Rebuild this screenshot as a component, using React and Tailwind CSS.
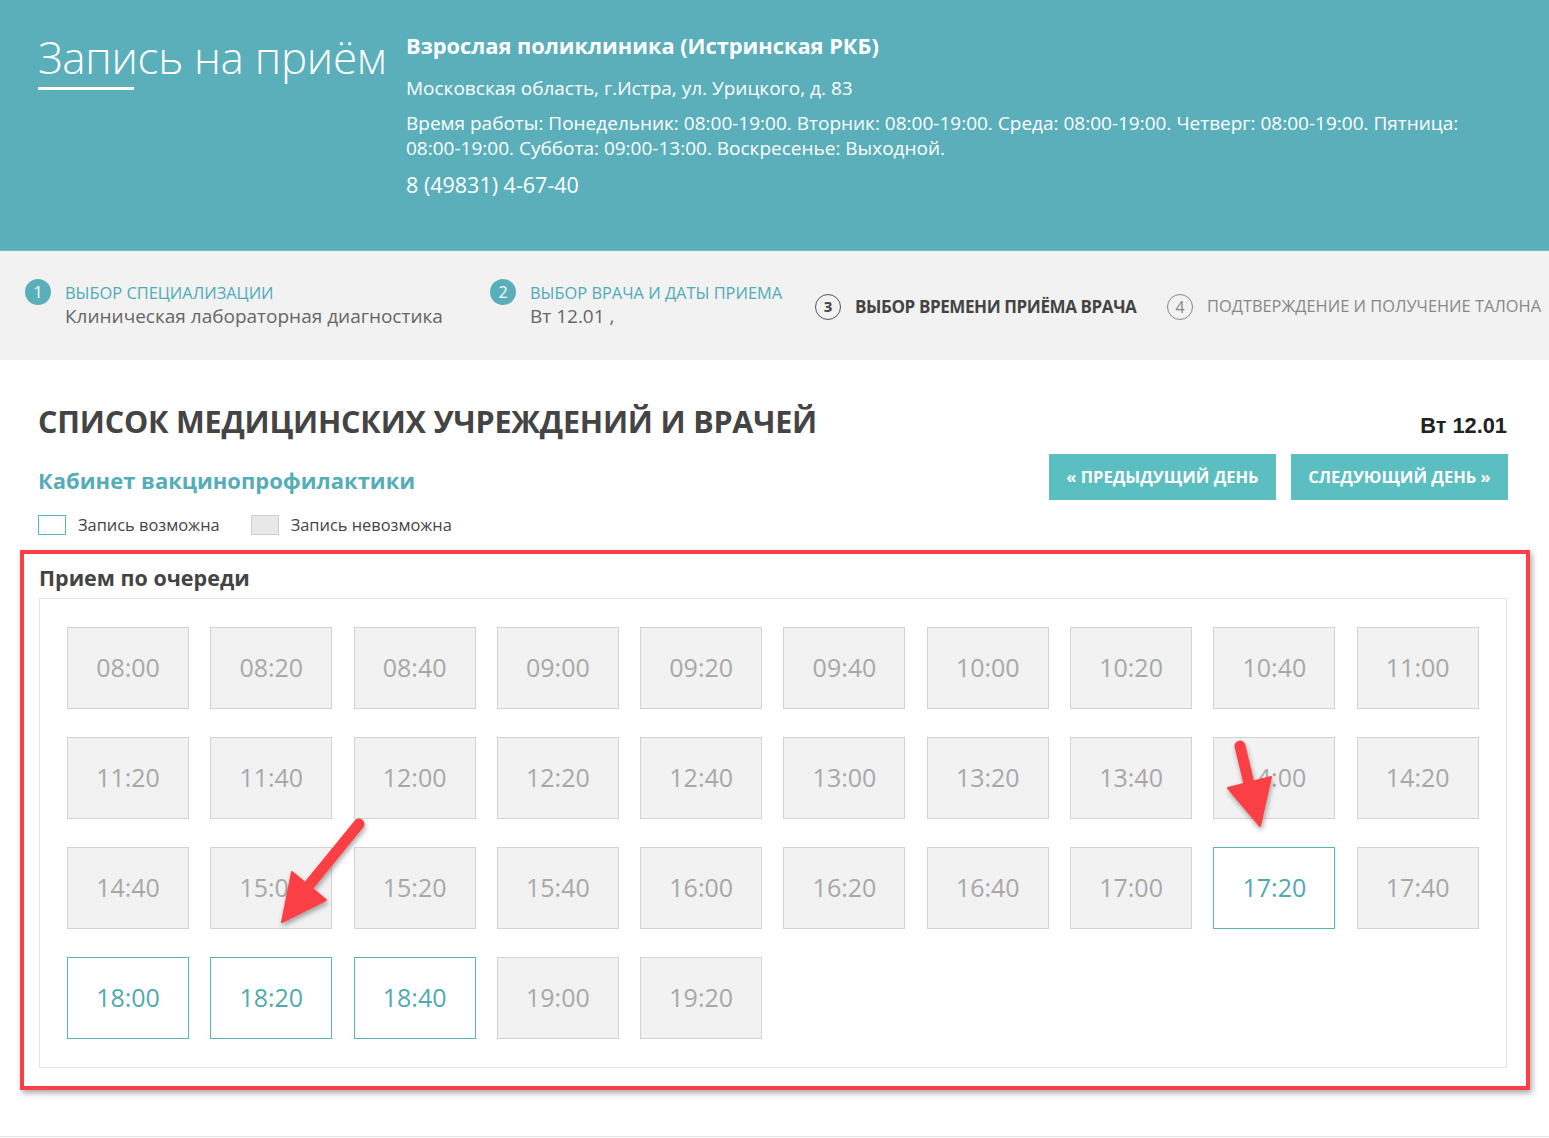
import React from "react";

const slots = [
  ["08:00", 0], ["08:20", 0], ["08:40", 0], ["09:00", 0], ["09:20", 0], ["09:40", 0], ["10:00", 0], ["10:20", 0], ["10:40", 0], ["11:00", 0],
  ["11:20", 0], ["11:40", 0], ["12:00", 0], ["12:20", 0], ["12:40", 0], ["13:00", 0], ["13:20", 0], ["13:40", 0], ["14:00", 0], ["14:20", 0],
  ["14:40", 0], ["15:00", 0], ["15:20", 0], ["15:40", 0], ["16:00", 0], ["16:20", 0], ["16:40", 0], ["17:00", 0], ["17:20", 1], ["17:40", 0],
  ["18:00", 1], ["18:20", 1], ["18:40", 1], ["19:00", 0], ["19:20", 0],
];

function Slot({ t, on }) {
  return on ? (
    <div className="h-[82px] flex items-center justify-center border border-[#5ab3bb] bg-white text-[#4fa9b3] text-[25px]">
      {t}
    </div>
  ) : (
    <div className="h-[82px] flex items-center justify-center border border-[#d2d2d2] bg-[#f2f2f2] text-[#a8a8a8] text-[25px]">
      {t}
    </div>
  );
}

export default function App() {
  return (
    <div className="relative w-[1549px] min-h-[1138px] bg-white font-['Open_Sans',sans-serif] text-[#444]">
      {/* header */}
      <div className="h-[250px] bg-[#5aafba] flex text-white">
        <div className="pl-[38px] pt-[28px] w-[406px] shrink-0">
          <div className="text-[44px] font-light leading-[58px] tracking-[-0.3px]">Запись на приём</div>
          <div className="mt-[1px] h-[3px] w-[96px] bg-white"></div>
        </div>
        <div className="pt-[31px] pr-[60px]">
          <div className="text-[21.8px] font-bold leading-[30px]">Взрослая поликлиника (Истринская РКБ)</div>
          <div className="mt-[14px] text-[19px] leading-[26px]">Московская область, г.Истра, ул. Урицкого, д. 83</div>
          <div className="mt-[10px] text-[19px] leading-[25px]">
            Время работы: Понедельник: 08:00-19:00. Вторник: 08:00-19:00. Среда: 08:00-19:00. Четверг: 08:00-19:00. Пятница: 08:00-19:00. Суббота: 09:00-13:00. Воскресенье: Выходной.
          </div>
          <div className="mt-[10px] text-[21.5px] leading-[28px]">8 (49831) 4-67-40</div>
        </div>
      </div>

      {/* steps */}
      <div className="h-[110px] bg-[#f2f2f2] border-t-[1px] border-[#6fbcc4] flex items-center pl-[25px]">
        <div className="flex items-start w-[465px] shrink-0">
          <div className="w-[26px] h-[26px] rounded-full bg-[#5aafba] text-white flex items-center justify-center text-[16px] shrink-0 mt-[-4px]">1</div>
          <div className="ml-[14px] mt-[-1px]">
            <div className="text-[#4fabb6] text-[16.4px] leading-[22px]">ВЫБОР СПЕЦИАЛИЗАЦИИ</div>
            <div className="text-[#666] text-[19px] leading-[24px]">Клиническая лабораторная диагностика</div>
          </div>
        </div>
        <div className="flex items-start w-[325px] shrink-0">
          <div className="w-[26px] h-[26px] rounded-full bg-[#5aafba] text-white flex items-center justify-center text-[16px] shrink-0 mt-[-4px]">2</div>
          <div className="ml-[14px] mt-[-1px]">
            <div className="text-[#4fabb6] text-[16.4px] leading-[22px]">ВЫБОР ВРАЧА И ДАТЫ ПРИЕМА</div>
            <div className="text-[#666] text-[19px] leading-[24px]">Вт 12.01 ,</div>
          </div>
        </div>
        <div className="flex items-center w-[352px] shrink-0 mt-[2px]">
          <div className="w-[26px] h-[26px] rounded-full border border-[#555] text-[#444] flex items-center justify-center text-[15px] font-bold shrink-0">3</div>
          <div className="ml-[14px] text-[#444] text-[17px] font-bold tracking-[-0.4px]">ВЫБОР ВРЕМЕНИ ПРИЁМА ВРАЧА</div>
        </div>
        <div className="flex items-center shrink-0 mt-[2px]">
          <div className="w-[26px] h-[26px] rounded-full border border-[#888] text-[#888] flex items-center justify-center text-[16px] shrink-0">4</div>
          <div className="ml-[14px] text-[#888] text-[16.4px] whitespace-nowrap">ПОДТВЕРЖДЕНИЕ И ПОЛУЧЕНИЕ ТАЛОНА</div>
        </div>
      </div>

      {/* content */}
      <div className="px-[38px] pt-[40px]">
        <div className="flex items-end justify-between pr-[3px]">
          <div className="text-[30.5px] font-bold leading-[42px] text-[#444] tracking-[-0.2px]">СПИСОК МЕДИЦИНСКИХ УЧРЕЖДЕНИЙ И ВРАЧЕЙ</div>
          <div className="text-[21.8px] font-bold font-['Liberation_Sans',sans-serif] text-[#222] mb-[-1px] mr-[1px]">Вт 12.01</div>
        </div>
        <div className="flex items-start justify-between mt-[12px]">
          <div>
            <div className="text-[22px] font-bold text-[#55adb8] leading-[30px] mt-[11px]">Кабинет вакцинопрофилактики</div>
            <div className="flex items-center mt-[18px] text-[16.4px] text-[#444]">
              <div className="w-[28px] h-[20px] border border-[#5ab3bb] bg-white"></div>
              <span className="ml-[12px]">Запись возможна</span>
              <div className="ml-[31px] w-[28px] h-[20px] border border-[#cfcfcf] bg-[#e8e8e8]"></div>
              <span className="ml-[12px]">Запись невозможна</span>
            </div>
          </div>
          <div className="flex gap-[15px] mr-[3px]">
            <div className="h-[46px] w-[227px] bg-[#5bbec1] text-white font-bold text-[16.5px] flex items-center justify-center">« ПРЕДЫДУЩИЙ ДЕНЬ</div>
            <div className="h-[46px] w-[217px] bg-[#5bbec1] text-white font-bold text-[16.5px] flex items-center justify-center">СЛЕДУЮЩИЙ ДЕНЬ »</div>
          </div>
        </div>
      </div>

      {/* red annotated panel */}
      <div className="ml-[20px] mt-[12px] w-[1510px] border-[4px] border-[#fa4045] shadow-[2px_3px_6px_rgba(0,0,0,0.35)] pl-[15px] pr-[19px] pt-[12px] pb-[18px]">
        <div className="text-[21.5px] font-bold text-[#444] leading-[24px]">Прием по очереди</div>
        <div className="mt-[8px] border border-[#e4e4e4] pl-[27px] pr-[28px] pt-[28px] pb-[28px]">
          <div className="grid grid-cols-[repeat(10,122px)] gap-x-[21.3px] gap-y-[28px]">
            {slots.map(([t, on]) => (
              <Slot key={t} t={t} on={on} />
            ))}
          </div>
        </div>
      </div>

      <div className="mt-[46px] h-px bg-[#e2e2e2]"></div>

      {/* arrows overlay */}
      <svg className="absolute left-0 top-0 pointer-events-none" width="1549" height="1138">
        <defs>
          <filter id="sh" x="-20%" y="-20%" width="140%" height="140%">
            <feDropShadow dx="1" dy="3" stdDeviation="2.5" floodColor="#000" floodOpacity="0.35" />
          </filter>
        </defs>
        <g filter="url(#sh)" fill="#fb4045" stroke="#fb4045">
          <line x1="359" y1="824" x2="310" y2="884" strokeWidth="11" strokeLinecap="round" />
          <polygon points="292,872 326,900 282,922" strokeWidth="2" strokeLinejoin="round" />
          <line x1="1240" y1="746" x2="1251" y2="792" strokeWidth="11" strokeLinecap="round" />
          <polygon points="1228,788 1271,777 1260,826" strokeWidth="2" strokeLinejoin="round" />
        </g>
      </svg>
    </div>
  );
}
